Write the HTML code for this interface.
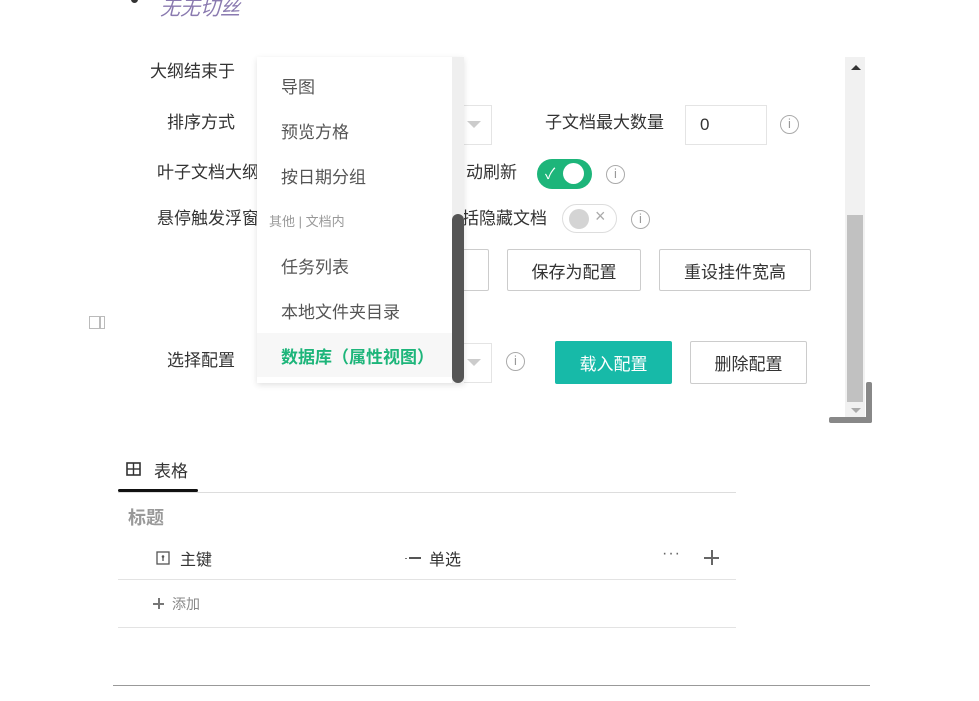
<!DOCTYPE html>
<html><head><meta charset="utf-8"><style>
body{margin:0;width:979px;height:701px;background:#fff;position:relative;overflow:hidden;font-family:"Liberation Sans","Noto Sans CJK SC",sans-serif;color:#333}
.a{position:absolute;white-space:nowrap}
.t{font-size:17px;line-height:20px}
.btn{position:absolute;border:1px solid #ccc;border-radius:2px;background:#fff;font-size:17px;display:flex;align-items:center;justify-content:center;color:#333;box-sizing:border-box}
.info{position:absolute;width:19px;height:19px;border:1.5px solid #aaa;border-radius:50%;box-sizing:border-box;color:#999;font-size:13px;line-height:16px;text-align:center;font-family:"Liberation Sans",sans-serif}
.sel{position:absolute;border:1px solid #e4e4e4;background:#fff;box-sizing:border-box}
.arr{position:absolute;width:0;height:0;border-left:7px solid transparent;border-right:7px solid transparent;border-top:7px solid #ccc}
.dd{position:absolute;font-size:17px;color:#555;left:281px}
</style></head><body>
<div class="a" style="left:131px;top:-4px;width:7px;height:7px;background:#333;border-radius:50%"></div>
<div class="a" style="left:160px;top:-8px;font-size:20px;color:#8a7ab0;font-style:italic">无无切丝</div>

<div class="a t" style="left:150px;top:62px">大纲结束于</div>
<div class="a t" style="left:167px;top:113px">排序方式</div>
<div class="a t" style="left:157px;top:163px">叶子文档大纲</div>
<div class="a t" style="left:157px;top:209px">悬停触发浮窗</div>
<div class="a t" style="left:167px;top:351px">选择配置</div>

<div class="sel" style="left:430px;top:105px;width:62px;height:40px"></div>
<div class="arr" style="left:467px;top:121px"></div>
<div class="sel" style="left:430px;top:343px;width:62px;height:40px"></div>
<div class="arr" style="left:467px;top:359px"></div>

<div class="a t" style="left:545px;top:113px">子文档最大数量</div>
<div class="sel" style="left:685px;top:105px;width:82px;height:40px;font-size:17px;padding:9px 0 0 14px">0</div>
<div class="info" style="left:780px;top:115px">i</div>

<div class="a t" style="left:466px;top:163px">动刷新</div>
<div class="a" style="left:537px;top:159px;width:55px;height:30px;border-radius:15px;background:#1db57a"></div>
<div class="a" style="left:545px;top:163px;color:#fff;font-size:15px">✓</div>
<div class="a" style="left:563px;top:163px;width:21px;height:21px;border-radius:50%;background:#fff"></div>
<div class="info" style="left:606px;top:165px">i</div>

<div class="a t" style="left:462px;top:209px">括隐藏文档</div>
<div class="a" style="left:562px;top:204px;width:55px;height:29px;border-radius:15px;border:1px solid #ddd;box-sizing:border-box;background:#fff"></div>
<div class="a" style="left:569px;top:209px;width:20px;height:20px;border-radius:50%;background:#d4d4d4"></div>
<div class="a" style="left:595px;top:206px;color:#aaa;font-size:18px">×</div>
<div class="info" style="left:631px;top:210px">i</div>

<div class="btn" style="left:440px;top:249px;width:49px;height:42px"></div>
<div class="btn" style="left:507px;top:249px;width:134px;height:42px">保存为配置</div>
<div class="btn" style="left:659px;top:249px;width:152px;height:42px">重设挂件宽高</div>

<div class="info" style="left:506px;top:352px">i</div>
<div class="btn" style="left:555px;top:341px;width:117px;height:43px;background:#17baa8;border-color:#17baa8;color:#fff">载入配置</div>
<div class="btn" style="left:690px;top:341px;width:117px;height:43px">删除配置</div>

<div class="a" style="left:89px;top:316px;width:16px;height:13px;border:1.5px solid #bbb;box-sizing:border-box"></div>
<div class="a" style="left:99px;top:316px;width:1.5px;height:13px;background:#bbb"></div>

<div class="a" style="left:845px;top:57px;width:20px;height:361px;background:#f1f1f1"></div>
<div class="a" style="left:847px;top:215px;width:16px;height:187px;background:#c1c1c1"></div>
<div class="a" style="left:851px;top:65px;border-left:5px solid transparent;border-right:5px solid transparent;border-bottom:5px solid #333"></div>
<div class="a" style="left:851px;top:408px;border-left:5px solid transparent;border-right:5px solid transparent;border-top:5px solid #aaa"></div>
<div class="a" style="left:866px;top:382px;width:6px;height:41px;background:#888;border-radius:2px"></div>
<div class="a" style="left:829px;top:417px;width:43px;height:6px;background:#888;border-radius:2px"></div>

<div class="a" style="left:257px;top:57px;width:207px;height:326px;background:#fff;box-shadow:0 2px 6px rgba(0,0,0,.12)"></div>
<div class="a" style="left:257px;top:333px;width:195px;height:44px;background:#f7f7f7"></div>
<div class="a" style="left:452px;top:57px;width:12px;height:326px;background:#efefef"></div>
<div class="a" style="left:452px;top:214px;width:12px;height:169px;background:#555;border-radius:6px"></div>
<div class="dd" style="top:73px">导图</div>
<div class="dd" style="top:118px">预览方格</div>
<div class="dd" style="top:163px">按日期分组</div>
<div class="a" style="left:269px;top:211px;font-size:13px;color:#999">其他 | 文档内</div>
<div class="dd" style="top:253px">任务列表</div>
<div class="dd" style="top:298px">本地文件夹目录</div>
<div class="dd" style="top:343px;color:#1db57a;font-weight:bold">数据库（属性视图）</div>

<svg class="a" style="left:126px;top:462px" width="16" height="14"><rect x="1" y="1" width="13" height="12" fill="none" stroke="#333" stroke-width="1.6"/><line x1="1" y1="7" x2="14" y2="7" stroke="#333" stroke-width="1.4"/><line x1="7.5" y1="1" x2="7.5" y2="13" stroke="#333" stroke-width="1.4"/></svg>
<div class="a" style="left:154px;top:457px;font-size:17px">表格</div>
<div class="a" style="left:118px;top:492px;width:618px;height:1px;background:#ddd"></div>
<div class="a" style="left:118px;top:489px;width:80px;height:3px;background:#111;border-radius:2px"></div>
<div class="a" style="left:128px;top:504px;font-size:18px;font-weight:bold;color:#999">标题</div>
<svg class="a" style="left:156px;top:551px" width="14" height="14"><rect x="1" y="1" width="12" height="12" fill="none" stroke="#555" stroke-width="1.3"/><circle cx="7" cy="5.5" r="1.3" fill="#555"/><line x1="7" y1="6" x2="7" y2="10" stroke="#555" stroke-width="1.3"/></svg>
<div class="a" style="left:180px;top:546px;font-size:16px">主键</div>
<div class="a" style="left:405px;top:558px;width:2px;height:1px;background:#777"></div>
<div class="a" style="left:409px;top:557px;width:12px;height:1.5px;background:#555"></div>
<div class="a" style="left:429px;top:546px;font-size:16px">单选</div>
<div class="a" style="left:662px;top:545px;font-size:16px;color:#666;letter-spacing:1px">···</div>
<div class="a" style="left:704px;top:557px;width:15px;height:1.5px;background:#666"></div>
<div class="a" style="left:711px;top:550px;width:1.5px;height:15px;background:#666"></div>
<div class="a" style="left:118px;top:579px;width:618px;height:1px;background:#e3e3e3"></div>
<div class="a" style="left:153px;top:603px;width:11px;height:1.5px;background:#777"></div>
<div class="a" style="left:158px;top:598px;width:1.5px;height:11px;background:#777"></div>
<div class="a" style="left:172px;top:594px;font-size:14px;color:#888">添加</div>
<div class="a" style="left:118px;top:627px;width:618px;height:1px;background:#e3e3e3"></div>
<div class="a" style="left:113px;top:685px;width:757px;height:1px;background:#999"></div>
</body></html>
